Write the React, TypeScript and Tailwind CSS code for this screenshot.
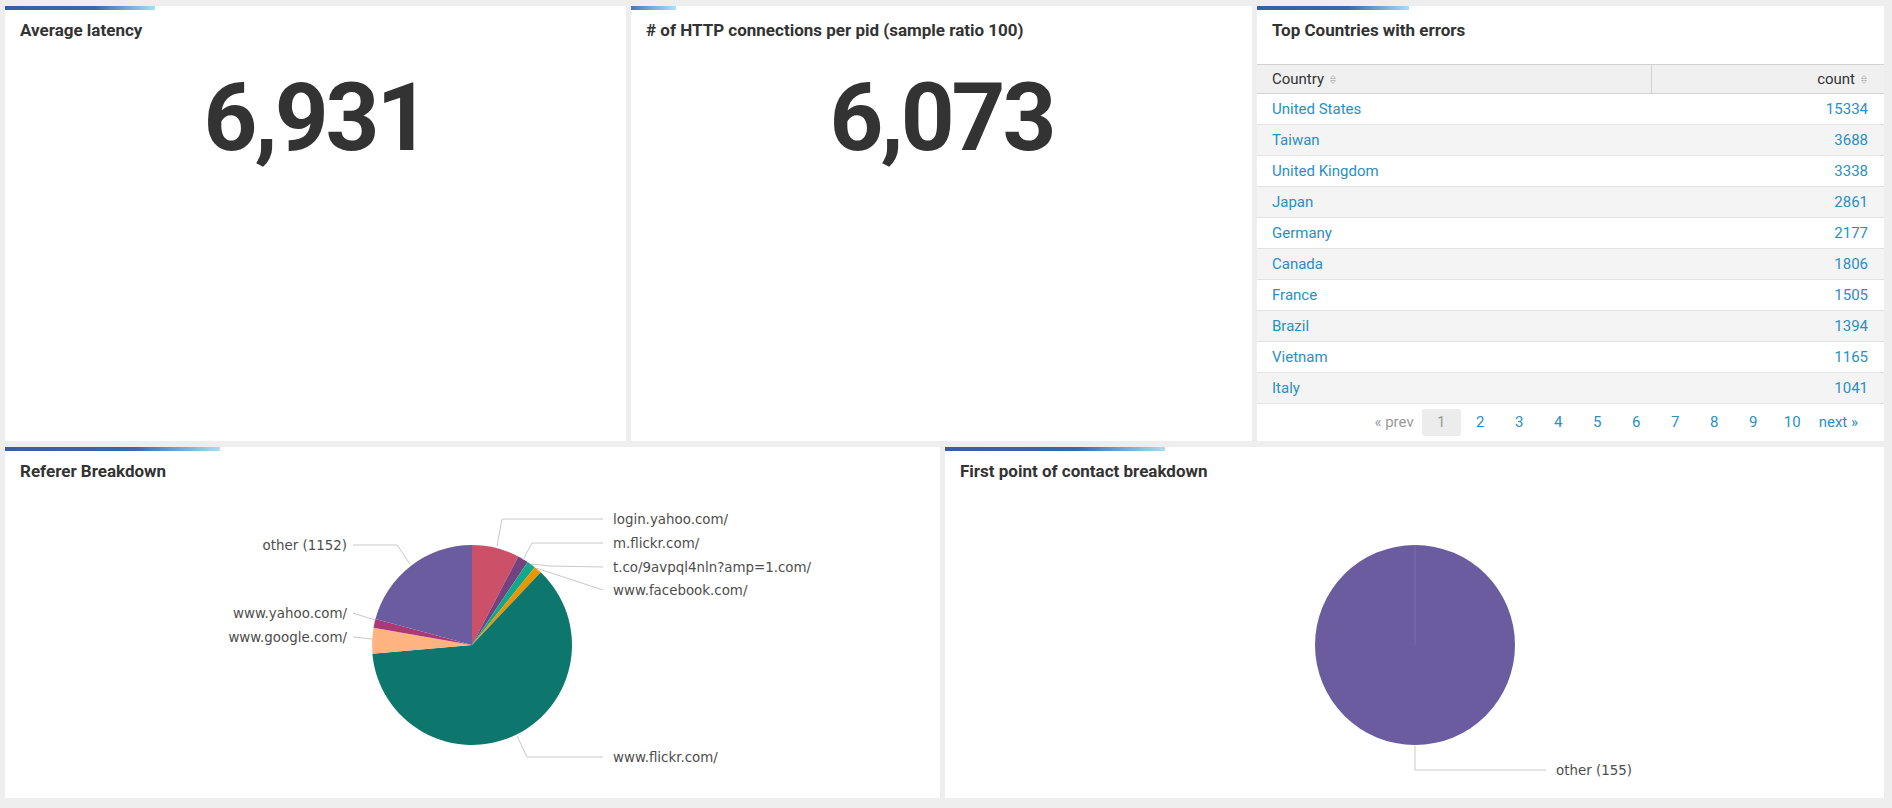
import React from "react";

const countries: [string, number][] = [
  ["United States", 15334],
  ["Taiwan", 3688],
  ["United Kingdom", 3338],
  ["Japan", 2861],
  ["Germany", 2177],
  ["Canada", 1806],
  ["France", 1505],
  ["Brazil", 1394],
  ["Vietnam", 1165],
  ["Italy", 1041],
];

// angles clockwise from 12 o'clock, in degrees
const referer = [
  { color: "#cc5068", from: 0, to: 27.6 },
  { color: "#73427f", from: 27.6, to: 33.8 },
  { color: "#11a88b", from: 33.8, to: 38.9 },
  { color: "#ea9600", from: 38.9, to: 43.4 },
  { color: "#0e776d", from: 43.4, to: 265 },
  { color: "#ffb380", from: 265, to: 280 },
  { color: "#aa3977", from: 280, to: 285 },
  { color: "#6a5c9e", from: 285, to: 360 },
];

const rightLabels = [
  { text: "login.yahoo.com/", y: 34, line: "598,34 497,34 492,61" },
  { text: "m.flickr.com/", y: 58, line: "598,58 527,58 518,75" },
  { text: "t.co/9avpql4nln?amp=1.com/", y: 82, line: "598,82 545,81 526,79" },
  { text: "www.facebook.com/", y: 105, line: "598,105 531,83" },
  { text: "www.flickr.com/", y: 272, line: "598,272 522,272 512,251" },
];

const leftLabels = [
  { text: "other (1152)", y: 60, line: "348,60 392,60 405,79" },
  { text: "www.yahoo.com/", y: 128, line: "348,128 370,135" },
  { text: "www.google.com/", y: 152, line: "348,152 367,154" },
];

function slicePath(cx: number, cy: number, r: number, a0: number, a1: number) {
  const rad = (a: number) => (a * Math.PI) / 180;
  const x0 = cx + r * Math.sin(rad(a0));
  const y0 = cy - r * Math.cos(rad(a0));
  const x1 = cx + r * Math.sin(rad(a1));
  const y1 = cy - r * Math.cos(rad(a1));
  const large = a1 - a0 > 180 ? 1 : 0;
  return `M${cx} ${cy} L${x0} ${y0} A${r} ${r} 0 ${large} 1 ${x1} ${y1} Z`;
}

function SortIcon() {
  return (
    <svg width="8" height="11" viewBox="0 0 8 11" className="ml-[5px] inline-block">
      <path d="M1.5 4.5 L4 1.5 L6.5 4.5 Z" fill="none" stroke="#b8b8b8" strokeWidth="0.9" />
      <path d="M1.5 6.5 L4 9.5 L6.5 6.5 Z" fill="none" stroke="#b8b8b8" strokeWidth="0.9" />
    </svg>
  );
}

function Panel({
  title,
  bar,
  children,
}: {
  title: string;
  bar: string;
  children?: React.ReactNode;
}) {
  return (
    <div className="flex min-w-0 flex-col bg-white">
      <div className={bar} />
      <h2 className="h-[34px] px-[15px] pt-[10px] font-['Roboto',sans-serif] text-[17px] font-bold leading-[20px] text-[#333]">
        {title}
      </h2>
      {children}
    </div>
  );
}

function BigNumber({ value }: { value: string }) {
  return (
    <div className="mt-[27px] text-center font-['Roboto',sans-serif] text-[94px] font-bold leading-none tracking-[-3px] text-[#333]">
      {value}
    </div>
  );
}

const labelFont = "'DejaVu Sans', sans-serif";

export default function App() {
  return (
    <div className="flex h-[808px] w-[1892px] flex-col gap-[6px] bg-[#eeeeee] pb-[10px] pl-[5px] pr-[8px] pt-[6px]">
      {/* top row */}
      <div className="grid h-[435px] grid-cols-[621px_621px_1fr] gap-[5px]">
        <Panel
          title="Average latency"
          bar="h-[4px] w-[150px] bg-[linear-gradient(90deg,#3560a0_0%,#3b68a8_60%,#a8ddf5_100%)]"
        >
          <BigNumber value="6,931" />
        </Panel>

        <Panel
          title="# of HTTP connections per pid (sample ratio 100)"
          bar="h-[4px] w-[45px] bg-[linear-gradient(90deg,#4a76b0_0%,#7fb4dc_55%,#aee0f6_100%)]"
        >
          <BigNumber value="6,073" />
        </Panel>

        <Panel
          title="Top Countries with errors"
          bar="h-[4px] w-[152px] bg-[linear-gradient(90deg,#3560a0_0%,#3b68a8_60%,#a8ddf5_100%)]"
        >
          <div className="mt-[20px] flex flex-1 flex-col font-['Roboto',sans-serif] text-[15px]">
            <div className="flex h-[30px] border-y border-[#d2d2d2] bg-[#f0f0f0] text-[#333]">
              <div className="flex flex-1 items-center border-r border-[#d2d2d2] pl-[15px]">
                Country
                <SortIcon />
              </div>
              <div className="flex w-[232px] items-center justify-end pr-[16px]">
                count
                <SortIcon />
              </div>
            </div>
            {countries.map(([name, count], i) => (
              <div
                key={name}
                className={`flex h-[31px] items-center justify-between border-b border-[#e2e2e2] pl-[15px] pr-[16px] text-[#2a8fc5] ${
                  i % 2 === 1 ? "bg-[#f4f4f4]" : "bg-white"
                }`}
              >
                <span>{name}</span>
                <span>{count}</span>
              </div>
            ))}
            <div className="flex flex-1 items-center justify-end pr-[19px] text-[#2a8fc5]">
              <span className="px-[8px] text-[#9a9a9a]">« prev</span>
              <span className="flex h-[27px] w-[39px] items-center justify-center rounded-[3px] bg-[#ececec] text-[#9a9a9a]">
                1
              </span>
              {[2, 3, 4, 5, 6, 7, 8, 9, 10].map((n) => (
                <span key={n} className="w-[39px] text-center">
                  {n}
                </span>
              ))}
              <span className="px-[7px]">next »</span>
            </div>
          </div>
        </Panel>
      </div>

      {/* bottom row */}
      <div className="grid flex-1 grid-cols-[935px_1fr] gap-[5px]">
        <Panel
          title="Referer Breakdown"
          bar="h-[4px] w-[215px] bg-[linear-gradient(90deg,#3560a0_0%,#3b68a8_60%,#a8ddf5_100%)]"
        >
          <svg width="935" height="313" viewBox="0 0 935 313">
            {referer.map((s) => (
              <path key={s.color} d={slicePath(467, 160, 100, s.from, s.to)} fill={s.color} />
            ))}
            {[...leftLabels, ...rightLabels].map((l) => (
              <polyline key={l.text} points={l.line} fill="none" stroke="#c9c9c9" strokeWidth="1" />
            ))}
            {leftLabels.map((l) => (
              <text
                key={l.text}
                x="342"
                y={l.y}
                textAnchor="end"
                dominantBaseline="central"
                fontFamily={labelFont}
                fontSize="13.4"
                fill="#4d4d4d"
              >
                {l.text}
              </text>
            ))}
            {rightLabels.map((l) => (
              <text
                key={l.text}
                x="608"
                y={l.y}
                dominantBaseline="central"
                fontFamily={labelFont}
                fontSize="13.4"
                fill="#4d4d4d"
              >
                {l.text}
              </text>
            ))}
          </svg>
        </Panel>

        <Panel
          title="First point of contact breakdown"
          bar="h-[4px] w-[220px] bg-[linear-gradient(90deg,#3560a0_0%,#3b68a8_60%,#a8ddf5_100%)]"
        >
          <svg width="939" height="313" viewBox="0 0 939 313">
            <circle cx="470" cy="160" r="100" fill="#6a5c9e" />
            <line x1="470" y1="60" x2="470" y2="160" stroke="#ffffff" strokeOpacity="0.12" strokeWidth="1" />
            <polyline points="470,261 470,285 601,285" fill="none" stroke="#c9c9c9" strokeWidth="1" />
            <text
              x="611"
              y="285"
              dominantBaseline="central"
              fontFamily={labelFont}
              fontSize="13.4"
              fill="#4d4d4d"
            >
              other (155)
            </text>
          </svg>
        </Panel>
      </div>
    </div>
  );
}
